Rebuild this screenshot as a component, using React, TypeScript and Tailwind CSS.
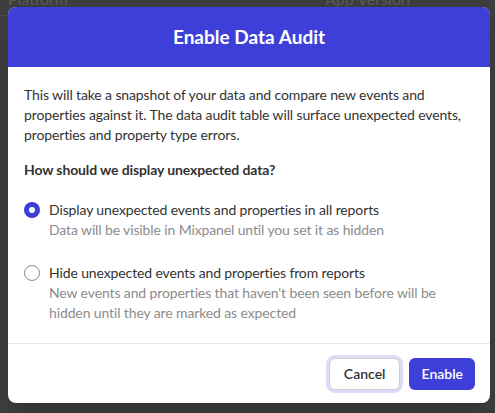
import { useState } from 'react';

const OPTIONS = [
  {
    id: 'display',
    label: 'Display unexpected events and properties in all reports',
    hint: 'Data will be visible in Mixpanel until you set it as hidden',
  },
  {
    id: 'hide',
    label: 'Hide unexpected events and properties from reports',
    hint: "New events and properties that haven't been seen before will be hidden until they are marked as expected",
  },
];

export default function App() {
  const [choice, setChoice] = useState('display');

  return (
    <div className="relative h-[413px] w-[495px] overflow-hidden bg-[#3d3d3d] pt-[7px] pl-[8px] font-['Lato',sans-serif]">
      {/* page behind the dialog */}
      <div className="absolute left-[8px] top-[-11px] text-[16px] leading-[20px] text-[#5a5a5a]">Platform</div>
      <div className="absolute left-[325px] top-[-11px] text-[16px] leading-[20px] text-[#5a5a5a]">App Version</div>
      <div className="absolute left-0 top-[15px] h-px w-[8px] bg-[#4a4a4a]" />

      <div className="relative w-[482px] overflow-hidden rounded-[8px] bg-white shadow-xl">
        <div className="flex h-[60px] items-center justify-center bg-[#3e3fd8] text-[19px] font-bold text-white">
          Enable Data Audit
        </div>

        <div className="px-[16px] pt-[18px] text-[14px] leading-[20px] tracking-[-0.12px] text-[#333]">
          <p>
            This will take a snapshot of your data and compare new events and properties against it. The data audit
            table will surface unexpected events, properties and property type errors.
          </p>
          <p className="mt-[15px] font-bold">How should we display unexpected data?</p>

          <div className="mt-[20px] flex flex-col gap-[23px]">
            {OPTIONS.map((o) => {
              const on = choice === o.id;
              return (
                <label key={o.id} className="flex cursor-pointer items-start gap-[9px]" onClick={() => setChoice(o.id)}>
                  <span
                    className={
                      on
                        ? 'mt-[2px] flex h-[16px] w-[16px] shrink-0 items-center justify-center rounded-full bg-[#3e3fd8]'
                        : 'mt-[2px] h-[16px] w-[16px] shrink-0 rounded-full border border-[#8a8a8a] bg-white'
                    }
                  >
                    {on && <span className="h-[6px] w-[6px] rounded-full bg-white" />}
                  </span>
                  <span className="flex flex-col pr-[20px]">
                    <span className="text-[#333]">{o.label}</span>
                    <span className="text-[#8c8c8c]">{o.hint}</span>
                  </span>
                </label>
              );
            })}
          </div>
        </div>

        <div className="mt-[20px] flex h-[60px] items-center justify-end gap-[6px] border-t border-[#e5e5e5] pr-[15px]">
          <button className="h-[38px] rounded-[9px] bg-[#dcdbf8] p-[3px]">
            <span className="flex h-[32px] items-center rounded-[6px] border border-[#d0d0d0] bg-white px-[14px] text-[14px] font-semibold text-[#333]">
              Cancel
            </span>
          </button>
          <button className="h-[32px] rounded-[6px] bg-[#3e3fd8] px-[12px] text-[14px] font-semibold text-white">
            Enable
          </button>
        </div>
      </div>
    </div>
  );
}
